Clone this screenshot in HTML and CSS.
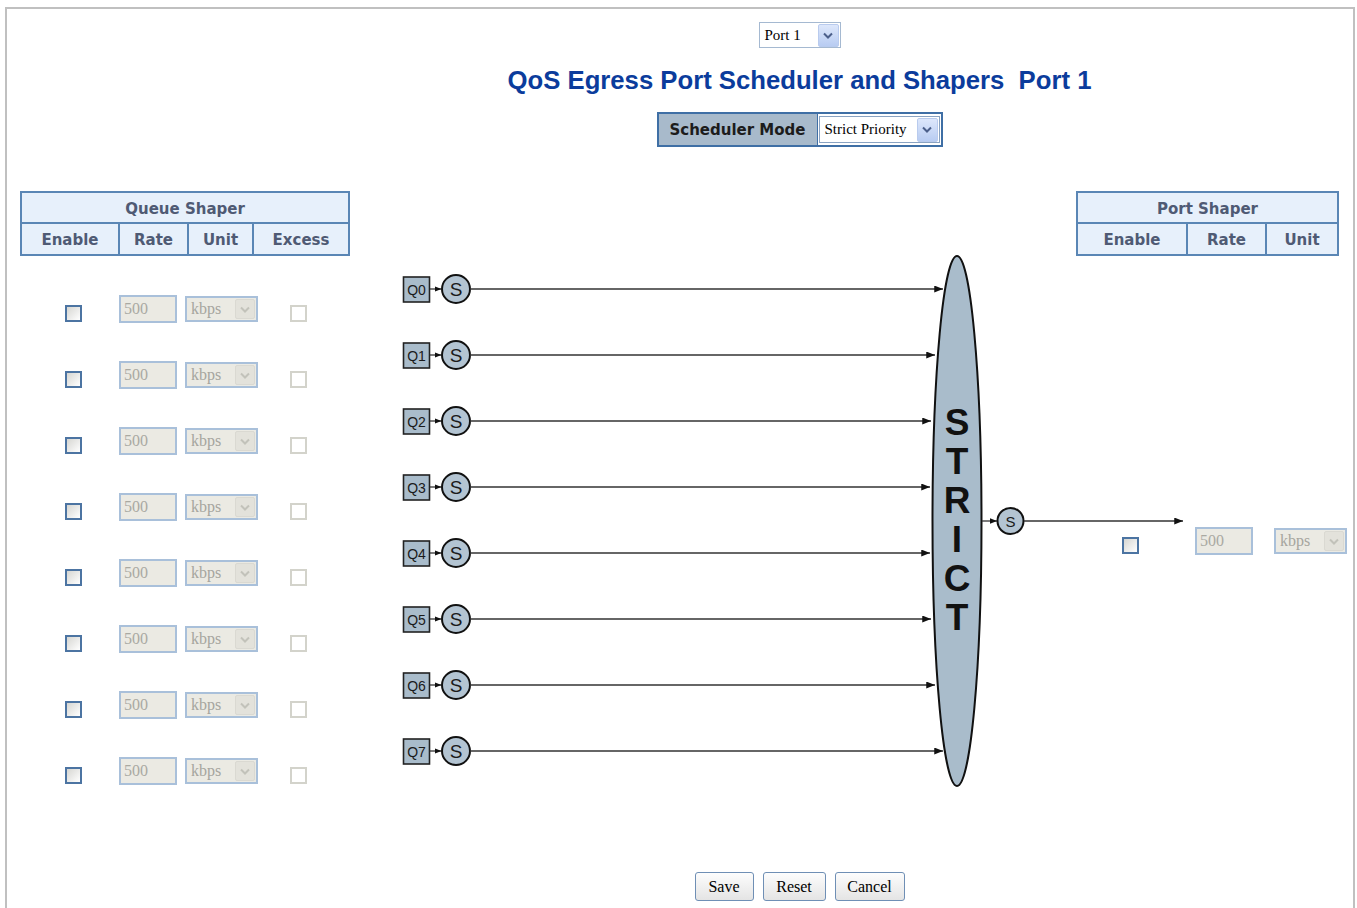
FILE: index.html
```html
<!DOCTYPE html>
<html lang="en">
<head>
    <meta charset="UTF-8">
    <title>QoS Egress Port Scheduler and Shapers</title>
    <link rel="stylesheet" href="styles.css">
</head>
<body>
<div class="frame">
    <!-- Port selector, title, scheduler mode -->
    <div class="top">
        <div class="select port-select">
            <span class="select-value">Port 1</span>
            <span class="select-btn"><svg width="10" height="7" viewBox="0 0 10 7"><path d="M1 1.5 L5 5.5 L9 1.5" fill="none" stroke="currentColor" stroke-width="2"/></svg></span>
        </div>
        <h1 class="title">QoS Egress Port Scheduler and Shapers&nbsp; Port 1</h1>
        <table class="mode-table">
            <tr>
                <th>Scheduler Mode</th>
                <td>
                    <div class="select mode-select">
                        <span class="select-value">Strict Priority</span>
                        <span class="select-btn"><svg width="10" height="7" viewBox="0 0 10 7"><path d="M1 1.5 L5 5.5 L9 1.5" fill="none" stroke="currentColor" stroke-width="2"/></svg></span>
                    </div>
                </td>
            </tr>
        </table>
    </div>

    <!-- Shaper table headers -->
    <div class="shaper-heads">
        <table class="shaper queue-shaper">
            <colgroup><col style="width:98px"><col style="width:69px"><col style="width:65px"><col style="width:96px"></colgroup>
            <tr><th colspan="4" class="caption">Queue Shaper</th></tr>
            <tr><th>Enable</th><th>Rate</th><th>Unit</th><th>Excess</th></tr>
        </table>
        <table class="shaper port-shaper">
            <colgroup><col style="width:110px"><col style="width:79px"><col style="width:72px"></colgroup>
            <tr><th colspan="3" class="caption">Port Shaper</th></tr>
            <tr><th>Enable</th><th>Rate</th><th>Unit</th></tr>
        </table>
    </div>

    <!-- Queues, scheduler diagram, port shaper -->
    <div class="scheduler">
        <div class="queue-rows">
            <div class="queue-row">
                <input type="checkbox" class="check">
                <input type="text" class="rate" value="500" disabled>
                <div class="select unit"><span class="select-value">kbps</span><span class="select-btn"><svg width="10" height="7" viewBox="0 0 10 7"><path d="M1 1.5 L5 5.5 L9 1.5" fill="none" stroke="currentColor" stroke-width="2"/></svg></span></div>
                <input type="checkbox" class="check excess" disabled>
            </div>
            <div class="queue-row">
                <input type="checkbox" class="check">
                <input type="text" class="rate" value="500" disabled>
                <div class="select unit"><span class="select-value">kbps</span><span class="select-btn"><svg width="10" height="7" viewBox="0 0 10 7"><path d="M1 1.5 L5 5.5 L9 1.5" fill="none" stroke="currentColor" stroke-width="2"/></svg></span></div>
                <input type="checkbox" class="check excess" disabled>
            </div>
            <div class="queue-row">
                <input type="checkbox" class="check">
                <input type="text" class="rate" value="500" disabled>
                <div class="select unit"><span class="select-value">kbps</span><span class="select-btn"><svg width="10" height="7" viewBox="0 0 10 7"><path d="M1 1.5 L5 5.5 L9 1.5" fill="none" stroke="currentColor" stroke-width="2"/></svg></span></div>
                <input type="checkbox" class="check excess" disabled>
            </div>
            <div class="queue-row">
                <input type="checkbox" class="check">
                <input type="text" class="rate" value="500" disabled>
                <div class="select unit"><span class="select-value">kbps</span><span class="select-btn"><svg width="10" height="7" viewBox="0 0 10 7"><path d="M1 1.5 L5 5.5 L9 1.5" fill="none" stroke="currentColor" stroke-width="2"/></svg></span></div>
                <input type="checkbox" class="check excess" disabled>
            </div>
            <div class="queue-row">
                <input type="checkbox" class="check">
                <input type="text" class="rate" value="500" disabled>
                <div class="select unit"><span class="select-value">kbps</span><span class="select-btn"><svg width="10" height="7" viewBox="0 0 10 7"><path d="M1 1.5 L5 5.5 L9 1.5" fill="none" stroke="currentColor" stroke-width="2"/></svg></span></div>
                <input type="checkbox" class="check excess" disabled>
            </div>
            <div class="queue-row">
                <input type="checkbox" class="check">
                <input type="text" class="rate" value="500" disabled>
                <div class="select unit"><span class="select-value">kbps</span><span class="select-btn"><svg width="10" height="7" viewBox="0 0 10 7"><path d="M1 1.5 L5 5.5 L9 1.5" fill="none" stroke="currentColor" stroke-width="2"/></svg></span></div>
                <input type="checkbox" class="check excess" disabled>
            </div>
            <div class="queue-row">
                <input type="checkbox" class="check">
                <input type="text" class="rate" value="500" disabled>
                <div class="select unit"><span class="select-value">kbps</span><span class="select-btn"><svg width="10" height="7" viewBox="0 0 10 7"><path d="M1 1.5 L5 5.5 L9 1.5" fill="none" stroke="currentColor" stroke-width="2"/></svg></span></div>
                <input type="checkbox" class="check excess" disabled>
            </div>
            <div class="queue-row">
                <input type="checkbox" class="check">
                <input type="text" class="rate" value="500" disabled>
                <div class="select unit"><span class="select-value">kbps</span><span class="select-btn"><svg width="10" height="7" viewBox="0 0 10 7"><path d="M1 1.5 L5 5.5 L9 1.5" fill="none" stroke="currentColor" stroke-width="2"/></svg></span></div>
                <input type="checkbox" class="check excess" disabled>
            </div>
        </div>

        <svg class="diagram" width="795" height="544" viewBox="395 256 795 544">
            <defs>
                <marker id="arrow" viewBox="0 0 10 8" refX="10" refY="4" markerWidth="9" markerHeight="7" orient="auto" markerUnits="userSpaceOnUse">
                    <path d="M0 0 L10 4 L0 8 z" fill="#111"/>
                </marker>
                <marker id="tiny" viewBox="0 0 10 8" refX="10" refY="4" markerWidth="7" markerHeight="6" orient="auto" markerUnits="userSpaceOnUse">
                    <path d="M0 0 L10 4 L0 8 z" fill="#111"/>
                </marker>
            </defs>

            <g class="queue">
                <rect x="403.5" y="277" width="26" height="25"/><text x="416.5" y="294.5">Q0</text>
                <line x1="430" y1="289" x2="441.5" y2="289" marker-end="url(#tiny)"/>
                <circle cx="456" cy="289" r="14"/><text class="s" x="456" y="296">S</text>
                <line x1="470" y1="289" x2="943" y2="289" marker-end="url(#arrow)"/>
            </g>
            <g class="queue">
                <rect x="403.5" y="343" width="26" height="25"/><text x="416.5" y="360.5">Q1</text>
                <line x1="430" y1="355" x2="441.5" y2="355" marker-end="url(#tiny)"/>
                <circle cx="456" cy="355" r="14"/><text class="s" x="456" y="362">S</text>
                <line x1="470" y1="355" x2="935" y2="355" marker-end="url(#arrow)"/>
            </g>
            <g class="queue">
                <rect x="403.5" y="409" width="26" height="25"/><text x="416.5" y="426.5">Q2</text>
                <line x1="430" y1="421" x2="441.5" y2="421" marker-end="url(#tiny)"/>
                <circle cx="456" cy="421" r="14"/><text class="s" x="456" y="428">S</text>
                <line x1="470" y1="421" x2="931" y2="421" marker-end="url(#arrow)"/>
            </g>
            <g class="queue">
                <rect x="403.5" y="475" width="26" height="25"/><text x="416.5" y="492.5">Q3</text>
                <line x1="430" y1="487" x2="441.5" y2="487" marker-end="url(#tiny)"/>
                <circle cx="456" cy="487" r="14"/><text class="s" x="456" y="494">S</text>
                <line x1="470" y1="487" x2="930" y2="487" marker-end="url(#arrow)"/>
            </g>
            <g class="queue">
                <rect x="403.5" y="541" width="26" height="25"/><text x="416.5" y="558.5">Q4</text>
                <line x1="430" y1="553" x2="441.5" y2="553" marker-end="url(#tiny)"/>
                <circle cx="456" cy="553" r="14"/><text class="s" x="456" y="560">S</text>
                <line x1="470" y1="553" x2="930" y2="553" marker-end="url(#arrow)"/>
            </g>
            <g class="queue">
                <rect x="403.5" y="607" width="26" height="25"/><text x="416.5" y="624.5">Q5</text>
                <line x1="430" y1="619" x2="441.5" y2="619" marker-end="url(#tiny)"/>
                <circle cx="456" cy="619" r="14"/><text class="s" x="456" y="626">S</text>
                <line x1="470" y1="619" x2="931" y2="619" marker-end="url(#arrow)"/>
            </g>
            <g class="queue">
                <rect x="403.5" y="673" width="26" height="25"/><text x="416.5" y="690.5">Q6</text>
                <line x1="430" y1="685" x2="441.5" y2="685" marker-end="url(#tiny)"/>
                <circle cx="456" cy="685" r="14"/><text class="s" x="456" y="692">S</text>
                <line x1="470" y1="685" x2="935" y2="685" marker-end="url(#arrow)"/>
            </g>
            <g class="queue">
                <rect x="403.5" y="739" width="26" height="25"/><text x="416.5" y="756.5">Q7</text>
                <line x1="430" y1="751" x2="441.5" y2="751" marker-end="url(#tiny)"/>
                <circle cx="456" cy="751" r="14"/><text class="s" x="456" y="758">S</text>
                <line x1="470" y1="751" x2="943" y2="751" marker-end="url(#arrow)"/>
            </g>

            <!-- strict priority scheduler -->
            <ellipse class="strict" cx="957" cy="521" rx="24.5" ry="265"/>
            <g class="strict-text">
                <text x="957" y="435">S</text>
                <text x="957" y="474">T</text>
                <text x="957" y="513">R</text>
                <text x="957" y="552">I</text>
                <text x="957" y="591">C</text>
                <text x="957" y="630">T</text>
            </g>

            <g class="queue">
                <line x1="982" y1="521" x2="997" y2="521" marker-end="url(#tiny)"/>
                <circle cx="1010.5" cy="521" r="13"/><text class="s small" x="1010.5" y="526.5">S</text>
                <line x1="1024" y1="521" x2="1183" y2="521" marker-end="url(#arrow)"/>
            </g>
        </svg>

        <div class="port-row">
            <input type="checkbox" class="check">
            <input type="text" class="rate" value="500" disabled>
            <div class="select unit"><span class="select-value">kbps</span><span class="select-btn"><svg width="10" height="7" viewBox="0 0 10 7"><path d="M1 1.5 L5 5.5 L9 1.5" fill="none" stroke="currentColor" stroke-width="2"/></svg></span></div>
        </div>
    </div>

    <!-- Actions -->
    <div class="buttons">
        <button class="btn save">Save</button>
        <button class="btn reset">Reset</button>
        <button class="btn cancel">Cancel</button>
    </div>
</div>
</body>
</html>
```

FILE: styles.css
```css
* {
    box-sizing: border-box;
}

body {
    margin: 0;
    background: #fff;
    font-family: "Liberation Sans", Arial, sans-serif;
    overflow: hidden;
}

.frame {
    margin: 7px 0 0 5px;
    width: 1350px;
    height: 920px;
    border: 2px solid #c0c0c0;
    border-bottom: none;
}

/* Top block (centered on the page content, not the frame) */
.top {
    padding: 13px 0 0 239px;
    display: flex;
    flex-direction: column;
    align-items: center;
}

.title {
    margin: 17px 0 0;
    font-size: 25.7px;
    line-height: 30px;
    font-weight: bold;
    color: #0b3c9c;
    white-space: nowrap;
}

/* Fake select boxes */
.select {
    display: flex;
    align-items: center;
    justify-content: space-between;
    background: #fff;
    border: 1px solid #a5b9d1;
    font-family: "Liberation Serif", "Times New Roman", serif;
    font-size: 15px;
    color: #000;
}

.select-value {
    padding-left: 5px;
    white-space: nowrap;
}

.select-btn {
    display: flex;
    align-items: center;
    justify-content: center;
    width: 21px;
    height: 23px;
    margin-right: 1px;
    background: linear-gradient(#dde7fb, #b8ccf2);
    border: 1px solid #b9cbee;
    border-radius: 2px;
    color: #4b5f8a;
}

.port-select {
    width: 82px;
    height: 26px;
}

.mode-table {
    margin-top: 17px;
    border-collapse: separate;
    border-spacing: 0;
    border: 2px solid #3f6fa5;
}

.mode-table th {
    width: 159px;
    height: 31px;
    padding: 0;
    background: #a8bacb;
    border-right: 1px solid #3f6fa5;
    font-family: "DejaVu Sans", Verdana, sans-serif;
    font-size: 15px;
    font-weight: bold;
    color: #1c1c1c;
}

.mode-table td {
    padding: 2px 1px;
    background: #fff;
}

.mode-select {
    width: 121px;
    height: 27px;
    border-color: #8aa3c2;
}

.mode-select .select-btn {
    height: 24px;
}

/* Shaper header tables */
.shaper-heads {
    margin-top: 44px;
    display: flex;
    justify-content: space-between;
    padding: 0 14px 0 13px;
}

.shaper {
    border-collapse: collapse;
    table-layout: fixed;
    border: 2px solid #3b6797;
    background: #e7f0fb;
}

.queue-shaper {
    width: 328px;
}

.port-shaper {
    width: 261px;
}

.shaper th {
    height: 32px;
    padding: 2px 0 0;
    border: 2px solid #5a86b5;
    font-family: "DejaVu Sans", Verdana, sans-serif;
    font-size: 15px;
    font-weight: bold;
    color: #4f5a74;
}

.shaper th.caption {
    height: 31px;
}

/* Scheduler area */
.scheduler {
    display: grid;
    grid-template-columns: 388px 795px 1fr;
}

.queue-rows {
    grid-column: 1;
    grid-row: 1;
    padding-top: 39px;
}

.queue-row {
    height: 66px;
    display: flex;
    align-items: flex-start;
    padding-left: 58px;
}

.check {
    appearance: none;
    width: 17px;
    height: 17px;
    margin: 10px 0 0;
    border: 2px solid #4c74a2;
    background: linear-gradient(135deg, #d6d6d2, #fff);
}

.check.excess {
    border-color: #d3d3cb;
    background: #fff;
}

.queue-row .check:first-child {
    margin-right: 37px;
}

.rate {
    width: 58px;
    height: 28px;
    margin: 0;
    padding: 0 0 0 3px;
    border: 2px solid #a9c0da;
    background: #ebeae3;
    color: #a9a9a2;
    font-family: "Liberation Serif", "Times New Roman", serif;
    font-size: 16px;
}

.select.unit {
    width: 73px;
    height: 26px;
    margin: 1px 0 0 8px;
    border: 2px solid #a9c0da;
    background: #ebeae3;
    color: #a5a59e;
    font-size: 16px;
}

.select.unit .select-value {
    padding-left: 4px;
}

.select.unit .select-btn {
    width: 20px;
    height: 20px;
    background: #e3e2db;
    border: 1px solid #dad9d2;
    color: #c2c2ba;
}

.queue-row .excess {
    margin-left: 32px;
}

.diagram {
    grid-column: 2;
    grid-row: 1;
    overflow: visible;
}

.queue rect {
    fill: #a9bccb;
    stroke: #222;
    stroke-width: 1.6;
}

.queue text {
    font-family: "Liberation Sans", Arial, sans-serif;
    font-size: 14px;
    text-anchor: middle;
    fill: #1a1a1a;
}

.queue text.s {
    font-size: 19px;
}

.queue text.s.small {
    font-size: 15px;
}

.queue line {
    stroke: #333;
    stroke-width: 1.3;
}

.queue circle {
    fill: #b3c4d2;
    stroke: #111;
    stroke-width: 2;
}

.strict {
    fill: #a9bccb;
    stroke: #111;
    stroke-width: 2;
}

.strict-text text {
    font-family: "Liberation Sans", Arial, sans-serif;
    font-size: 37px;
    font-weight: bold;
    text-anchor: middle;
    fill: #111;
}

.port-row {
    grid-column: 2 / 4;
    grid-row: 1;
    justify-self: end;
    align-self: start;
    display: flex;
    align-items: flex-start;
    margin: 271px 6px 0 0;
}

.port-row .check {
    margin-right: 56px;
}

.port-row .select.unit {
    margin-left: 21px;
}

/* Buttons */
.buttons {
    display: flex;
    justify-content: center;
    gap: 9px;
    padding-left: 239px;
    margin-top: 49px;
}

.btn {
    height: 29px;
    padding: 0;
    border: 1px solid #6f8fb5;
    border-radius: 3px;
    background: linear-gradient(#fdfdfd, #e4e4e4);
    font-family: "Liberation Serif", "Times New Roman", serif;
    font-size: 16px;
    color: #000;
}

.save {
    width: 59px;
}

.reset {
    width: 63px;
}

.cancel {
    width: 70px;
}
```
